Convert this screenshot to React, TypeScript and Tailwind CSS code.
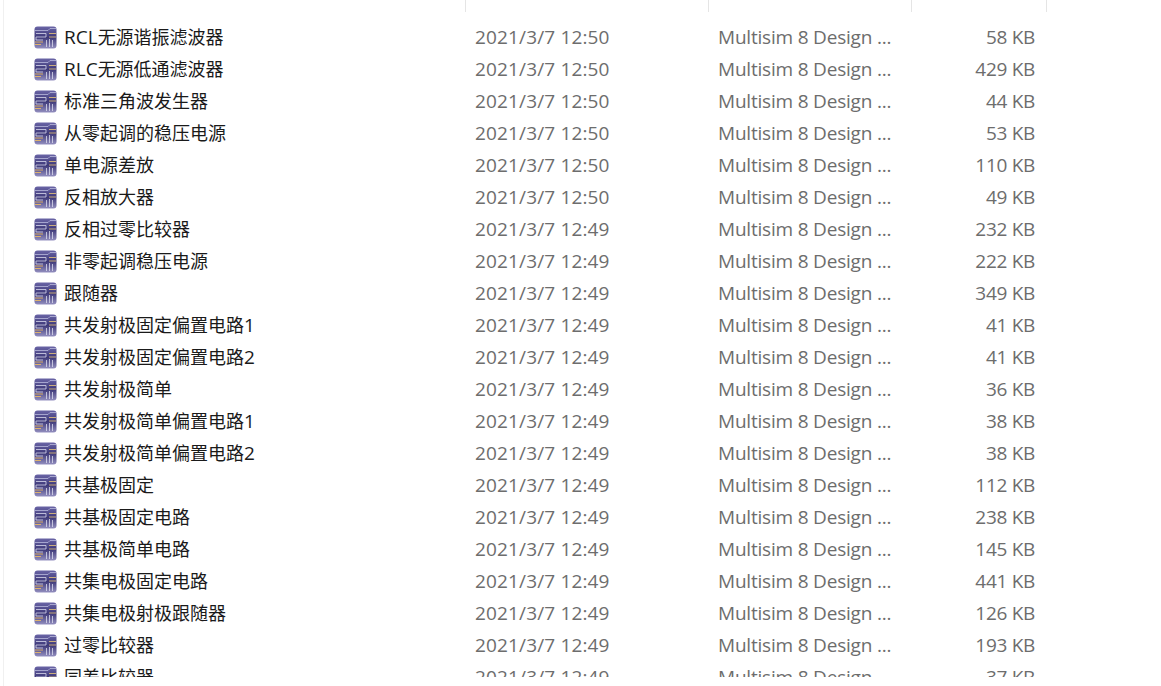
const rows: [string, string, string][] = [
  ["RCL无源谐振滤波器", "2021/3/7 12:50", "58 KB"],
  ["RLC无源低通滤波器", "2021/3/7 12:50", "429 KB"],
  ["标准三角波发生器", "2021/3/7 12:50", "44 KB"],
  ["从零起调的稳压电源", "2021/3/7 12:50", "53 KB"],
  ["单电源差放", "2021/3/7 12:50", "110 KB"],
  ["反相放大器", "2021/3/7 12:50", "49 KB"],
  ["反相过零比较器", "2021/3/7 12:49", "232 KB"],
  ["非零起调稳压电源", "2021/3/7 12:49", "222 KB"],
  ["跟随器", "2021/3/7 12:49", "349 KB"],
  ["共发射极固定偏置电路1", "2021/3/7 12:49", "41 KB"],
  ["共发射极固定偏置电路2", "2021/3/7 12:49", "41 KB"],
  ["共发射极简单", "2021/3/7 12:49", "36 KB"],
  ["共发射极简单偏置电路1", "2021/3/7 12:49", "38 KB"],
  ["共发射极简单偏置电路2", "2021/3/7 12:49", "38 KB"],
  ["共基极固定", "2021/3/7 12:49", "112 KB"],
  ["共基极固定电路", "2021/3/7 12:49", "238 KB"],
  ["共基极简单电路", "2021/3/7 12:49", "145 KB"],
  ["共集电极固定电路", "2021/3/7 12:49", "441 KB"],
  ["共集电极射极跟随器", "2021/3/7 12:49", "126 KB"],
  ["过零比较器", "2021/3/7 12:49", "193 KB"],
  ["同差比较器", "2021/3/7 12:49", "37 KB"],
];

function FileIcon() {
  return (
    <svg width="23" height="23" viewBox="0 0 23 23" className="shrink-0">
      <defs>
        <linearGradient id="g" x1="0" y1="0" x2="0" y2="1">
          <stop offset="0" stopColor="#6a65a6" />
          <stop offset="0.5" stopColor="#3d3878" />
          <stop offset="1" stopColor="#9490c0" />
        </linearGradient>
      </defs>
      <rect x="0.5" y="0.5" width="22" height="22" rx="3" fill="url(#g)" />
      <path d="M1 4.5H14L16 2.5H22" stroke="#b9b9dc" strokeWidth="0.8" fill="none" />
      <path d="M2 7.5H12V11H2V14H9" stroke="#d8d8ec" strokeWidth="0.8" fill="none" />
      <path d="M15 7.5H22M15 11H22" stroke="#d9ba7c" strokeWidth="0.9" fill="none" />
      <path d="M1 16H9M1 18.5H7" stroke="#e8b868" strokeWidth="0.9" fill="none" />
      <path d="M12.5 21V14M15.5 21V13M18.5 21V14" stroke="#dcdcee" strokeWidth="0.8" fill="none" />
    </svg>
  );
}

function Name({ text }: { text: string }) {
  const parts = text.split(/([A-Za-z0-9]+)/).filter(Boolean);
  return (
    <span className="whitespace-nowrap">
      {parts.map((p, i) =>
        /^[A-Za-z0-9]+$/.test(p) ? (
          <span key={i} className="text-[19px]">{p}</span>
        ) : (
          <span key={i} className="text-[18px]">{p}</span>
        ),
      )}
    </span>
  );
}

export default function App() {
  return (
    <div className="h-[686px] w-[1161px] overflow-hidden bg-white font-['Open_Sans','Noto_Sans_CJK_SC',sans-serif]">
      <div className="ml-[3px] h-[686px] border-l border-[#f0f0f0]">
        <div className="flex h-[12px] items-stretch overflow-hidden text-[18px] leading-8 text-[#4c607a]">
          <div className="w-[462px] whitespace-nowrap border-r border-[#e5e5e5] pl-[26px]"><div className="-mt-[25px]">名称</div></div>
          <div className="w-[243px] whitespace-nowrap border-r border-[#e5e5e5] pl-[9px]"><div className="-mt-[25px]">修改日期</div></div>
          <div className="w-[203px] whitespace-nowrap border-r border-[#e5e5e5] pl-[9px]"><div className="-mt-[25px]">类型</div></div>
          <div className="w-[135px] whitespace-nowrap border-r border-[#e5e5e5] pl-[9px]"><div className="-mt-[25px]">大小</div></div>
        </div>
        <div className="flex h-[665px] flex-col overflow-hidden pt-[9px]">
          {rows.map(([name, date, size]) => (
            <div key={name} className="flex h-8 shrink-0 items-center text-[19px] leading-8">
              <div className="flex w-[462px] shrink-0 items-center gap-[7px] pl-[30px] text-[#1a1a1a]">
                <FileIcon />
                <Name text={name} />
              </div>
              <div className="w-[243px] shrink-0 pl-[9px] tracking-[0.15px] text-[#6d6d6d]">{date}</div>
              <div className="w-[203px] shrink-0 whitespace-nowrap pl-[9px] tracking-[-0.2px] text-[#6d6d6d]">Multisim 8 Design ...</div>
              <div className="w-[123px] shrink-0 text-right tracking-[-0.3px] text-[#6d6d6d]">{size}</div>
            </div>
          ))}
        </div>
      </div>
    </div>
  );
}
